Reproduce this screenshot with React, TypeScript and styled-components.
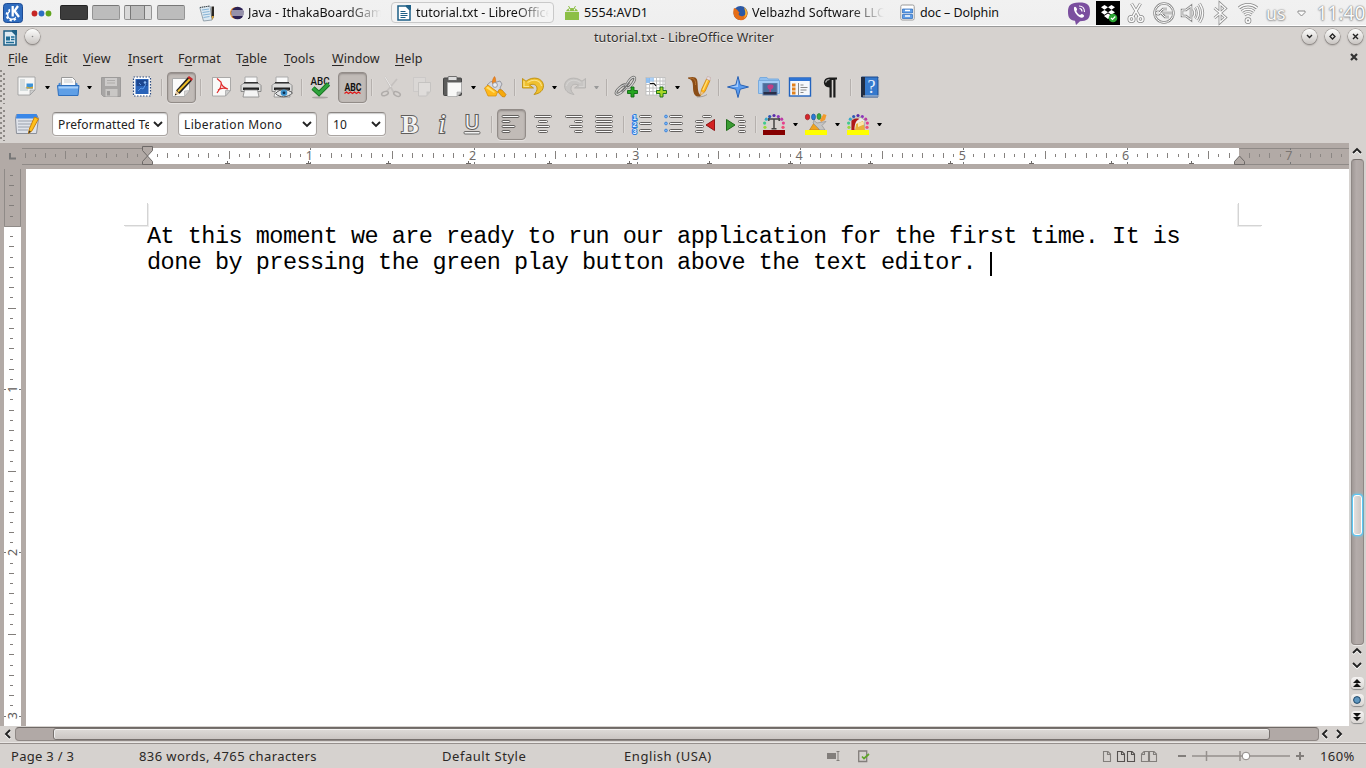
import React from "react";
import styled, { createGlobalStyle, css } from "styled-components";

const Global = createGlobalStyle`
  * { box-sizing: border-box; }
  html, body { margin: 0; padding: 0; overflow: hidden; background: #d6d2cf; }
  svg { display: block; flex: none; overflow: visible; }
`;

const Desktop = styled.div`
  width: 1366px; height: 768px; overflow: hidden;
  display: flex; flex-direction: column;
  background: #d6d2cf; color: #2b2826;
  font: 13px/18px "Noto Sans", "Open Sans", sans-serif;
`;

/* ---------- shared text ---------- */
const Label = styled.span<{ $w?: number; $ls?: number; $gap?: number; $fade?: boolean }>`
  display: block; flex: none; white-space: pre; overflow: visible;
  width: ${p => (p.$w ? `${p.$w}px` : "auto")};
  letter-spacing: ${p => p.$ls ?? 0}px;
  margin-left: ${p => p.$gap ?? 0}px;
  ${p => p.$fade && css`
    overflow: hidden;
    mask-image: linear-gradient(90deg, #000 75%, transparent 100%);
  `}
`;

/* ---------- desktop panel ---------- */
const Panel = styled.header`
  height: 27px; flex: none; display: flex; align-items: center;
  background: linear-gradient(#f1f1f1, #efefef);
  border-bottom: 1px solid #999; box-shadow: inset 0 -1px #fff;
  padding-left: 3px; color: #111;
  font-size: 12.5px;
`;
const Cell = styled.div<{ $gap?: number }>`
  flex: none; display: flex; align-items: center; margin-left: ${p => p.$gap ?? 0}px;
`;
const Pager = styled.div<{ $on?: boolean; $split?: boolean; $gap: number }>`
  width: 28px; height: 15px; flex: none; margin: -1px 0 0 ${p => p.$gap}px;
  border-radius: 2px; border: 1px solid ${p => (p.$on ? "#2d2d2d" : "#949494")};
  border-top-color: ${p => (p.$on ? "#222" : "#777")};
  background: ${p => p.$on ? "#3c3c3c" : p.$split
    ? "linear-gradient(90deg,#d9d9d9 5px,#777 5px 6px,#bbb 6px 19px,#777 19px 20px,#d9d9d9 20px)" : "#bcbcbc"};
`;
const Task = styled.div<{ $w: number; $gap: number; $active?: boolean }>`
  width: ${p => p.$w}px; height: 21px; flex: none; margin: -1px 0 0 ${p => p.$gap}px; padding-left: 5px;
  display: flex; align-items: center; gap: 4px; border-radius: 4px;
  border: 1px solid ${p => (p.$active ? "#c9c9c9" : "transparent")};
  background: ${p => (p.$active ? "#f4f4f4" : "transparent")};
`;
const TrayText = styled.span<{ $size: number; $gap: number }>`
  flex: none; margin: -1px 0 0 ${p => p.$gap}px; font-size: ${p => p.$size}px; color: #fafafa; line-height: 24px;
  white-space: nowrap; text-shadow: 0 0 1px #777, 0 0 2px #888, 0 1px 2px #aaa;
`;

/* ---------- window frame ---------- */
const TitleBar = styled.div`
  height: 21px; flex: none; display: flex; align-items: center; padding: 0 3px;
`;
const Title = styled.div`
  flex: 1; text-align: center; font-size: 12.5px; color: #33302e; text-shadow: 0 1px #f2f0ee; letter-spacing: .11px;
  padding-left: 26px;
`;
const RoundButton = styled.span<{ $gap?: number }>`
  width: 15px; height: 15px; flex: none; margin: -2px 0 0 ${p => p.$gap ?? 0}px; border-radius: 50%;
  display: flex; align-items: center; justify-content: center;
  background: linear-gradient(#fdfdfc, #c9c5c2);
  box-shadow: 0 0 0 .5px #8f8b88, 0 1px 2px #77726f;
`;
const MenuBar = styled.nav`
  height: 21px; flex: none; display: flex; align-items: center; padding-left: 8px;
`;
const MenuItem = styled.span<{ $w: number }>`
  width: ${p => p.$w}px; flex: none; white-space: nowrap; letter-spacing: .05px; font-size: 12.5px;
  u { text-underline-offset: 2px; }
`;
const CloseDoc = styled.span`margin: -3px 8px 0 auto;`;

/* ---------- toolbars ---------- */
const ToolRow = styled.div<{ $h: number }>`
  height: ${p => p.$h}px; flex: none; display: flex; align-items: center;
`;
const Grip = styled.i`
  width: 8px; height: 34px; flex: none;
  background: radial-gradient(circle at 1px 1px, #8d8986 0.8px, transparent 1.2px) 0 0/5px 5px,
    radial-gradient(circle at 1px 1px, #8d8986 0.8px, transparent 1.2px) 3px 3px/5px 5px;
  clip-path: inset(0 3px 0 0);
`;
const Tool = styled.span<{ $gap: number; $on?: boolean; $dim?: boolean }>`
  flex: none; display: flex; align-items: center; justify-content: center;
  width: ${p => (p.$on ? 29 : 24)}px; height: ${p => (p.$on ? 31 : 24)}px; margin-left: ${p => p.$gap}px;
  opacity: ${p => (p.$dim ? 0.5 : 1)};
  ${p => p.$on && css`
    border: 1px solid #928c88; border-radius: 4px; background: #c1bbb7;
    box-shadow: inset 0 1px 2px #8d8784, 0 1px #e5e2e0;
  `}
`;
const Arrow = styled.i<{ $gap: number; $dim?: boolean }>`
  width: 5px; height: 3px; flex: none; margin: 0 1.5px 0 ${p => p.$gap + 1.5}px;
  border: solid transparent; border-width: 3px 2.5px 0; border-top-color: ${p => (p.$dim ? "#999" : "#000")};
`;
const Sep = styled.i<{ $gap: number }>`
  width: 1px; height: 17px; flex: none; margin-left: ${p => p.$gap}px; background: #b5b0ad; box-shadow: 1px 0 #dedbd8;
`;
const Combo = styled.div<{ $w: number; $gap: number }>`
  width: ${p => p.$w}px; height: 24px; flex: none; margin-left: ${p => p.$gap}px; padding: 0 4px 0 5px;
  display: flex; align-items: center; justify-content: space-between; gap: 4px;
  background: #fff; border: 1px solid #aaa5a2; border-top-color: #8b8683; border-radius: 4px;
  box-shadow: inset 0 1px 1px #ccc, 0 1px #e8e6e4; font-size: 12px; color: #222;
`;
const ComboText = styled.span<{ $ls: number }>`
  flex: 1; min-width: 0; margin-top: 1px; overflow: hidden; white-space: nowrap; letter-spacing: ${p => p.$ls}px;
`;

/* ---------- document area ---------- */
const Work = styled.main`height: 583px; flex: none; display: flex;`;
const Editor = styled.section`width: 1349px; display: flex; flex-direction: column; background: #b2aaa6;`;
const RulerRow = styled.div`height: 26px; flex: none;`;
const PageRow = styled.div`flex: 1; display: flex; min-height: 0;`;
const SideRuler = styled.div`width: 26px; flex: none; overflow: hidden;`;
const Page = styled.article`
  flex: 1; background: #fff; display: flex; flex-direction: column; padding: 34px 87px 0 98px;
`;
const Corners = styled.div`display: flex; justify-content: space-between; height: 24px; flex: none;`;
const Corner = styled.i<{ $right?: boolean }>`
  width: 24px; height: 23px; border: solid #d4d4d4;
  border-width: ${p => (p.$right ? "0 0 1px 1px" : "0 1px 1px 0")};
  box-shadow: ${p => (p.$right ? "-1px 1px #ececec" : "1px 1px #ececec")};
`;
const Body = styled.p`
  margin: -3px 0 0 23px; color: #000; white-space: pre; letter-spacing: -.51px;
  font: 23.500px/26px "Liberation Mono", monospace;
`;
const Caret = styled.i`
  display: inline-block; width: 2px; height: 24px; vertical-align: -7px; background: #000;
`;

/* ---------- scroll bars ---------- */
const VScroll = styled.aside`
  width: 17px; display: flex; flex-direction: column; align-items: center; background: #d6d2cf; padding-right: 1px;
`;
const VTrack = styled.div`
  width: 13px; height: 486px; flex: none; padding: 335px 1px 0; border-radius: 4px;
  background: linear-gradient(90deg, #a09996, #b4acaa 40%, #aea6a3); border: 1px solid #8f8885; border-top-color: #77716e;
  box-shadow: 0 1px #eceae8;
`;
const VThumb = styled.div`
  height: 40px; border-radius: 3px; border: 1px solid #fff; background: linear-gradient(90deg, #e3e0de, #cdc8c5);
  box-shadow: 0 0 0 1px #5cc8f5, 0 0 3px 1px #5cd0ff;
`;
const SmallButton = styled.span`
  width: 13px; height: 12px; margin-bottom: 5px; flex: none; border-radius: 4px;
  display: flex; align-items: center; justify-content: center;
  background: linear-gradient(#f4f2f1, #dad6d3); box-shadow: 0 1px 1px #888;
`;
const Chevron = styled.span<{ $h: number }>`
  height: ${p => p.$h}px; flex: none; display: flex; align-items: center; justify-content: center;
`;
const HScroll = styled.div`height: 17px; flex: none; display: flex; align-items: center; padding-bottom: 1px; border-bottom: 1px solid #e9e6e4;`;
const HTrack = styled.div`
  width: 1304px; height: 14px; margin: 0 1px 0 2px; padding: 1px 0 0 37px; border-radius: 4px;
  background: #b1a9a6; border: 1px solid #8f8885; border-top: 1px solid #6f6966;
`;
const HThumb = styled.div`
  width: 1217px; height: 12px; margin-top: -1px; border-radius: 3px; border: 1px solid #77716e;
  background: linear-gradient(#dedbd8, #cbc6c3); box-shadow: inset 0 1px #f3f1f0, inset 1px 0 #eee;
`;

/* ---------- status bar ---------- */
const Status = styled.footer`
  flex: 1; display: flex; align-items: center; border-top: 1px solid #96908d; padding: 0 0 0 11px;
  font-size: 13px; color: #2b2826;
`;

const ICON = { width: 24, height: 24, viewBox: "0 0 24 24", fill: "none" } as const;

const Chev = ({ d }: { d: string }) => (
  <svg width="10" height="10" viewBox="0 0 10 10" fill="none">
    <path d={d} stroke="#fff" strokeWidth="2" transform="translate(0 1)" />
    <path d={d} stroke="#222" strokeWidth="1.9" />
  </svg>
);
const UP = "M1 7L5 3L9 7", DOWN = "M1 3L5 7L9 3", LEFT = "M7 1L3 5L7 9", RIGHT = "M3 1L7 5L3 9";

const NewDoc = () => (
  <svg {...ICON}><path d="M4 2h17v13l-5 5H4z" fill="#f6f6f5" stroke="#999" strokeWidth=".8" /><path d="M21 15h-5v5z" fill="#ccc" stroke="#999" strokeWidth=".6" />
    <path d="M6 5h5M6 7h5M6 9h5M6 11h5M6 13h12M6 15h8" stroke="#b6c3c6" />
    <rect x="12.500" y="8.500" width="6.500" height="5" fill="#3d93d8" /><path d="M12.500 13.500v-2l3 1 3.500-1v2z" fill="#d5a72e" /></svg>
);
const OpenFolder = () => (
  <svg {...ICON}><path d="M5.500 12V2.500h11l3 3V12z" fill="#fafafa" stroke="#999" /><path d="M8 5h8M8 7h9" stroke="#ccc" />
    <path d="M2.500 8.500l2-1v4h15v-4l2 1v5h-19z" fill="#4387d6" />
    <path d="M1.500 10.500h21.500l-1 10h-19.500z" fill="#5f9fe6" stroke="#2f6fbd" /><path d="M2.500 11.500h19.500v2h-19.500z" fill="#a8cff8" /></svg>
);
const Floppy = () => (
  <svg {...ICON}><path d="M2.500 2.500h19v19h-17l-2-2z" fill="#7c7c7c" stroke="#666" /><rect x="6" y="3" width="12" height="8" fill="#c6c6c6" />
    <path d="M8 5.500h8M8 8h8" stroke="#888" /><rect x="6.500" y="14" width="12" height="7.500" fill="#bdbdbd" /><rect x="8" y="16" width="3" height="4.500" fill="#666" /></svg>
);
const Stamp = () => (
  <svg {...ICON}><rect x="3.500" y="2" width="17" height="19" fill="#fff" stroke="#2a4a80" strokeWidth="1.200" strokeDasharray="1.500 1.500" />
    <rect x="5.500" y="4" width="13" height="15" fill="#2862b8" /><rect x="6.500" y="5" width="11" height="6" fill="#1c468f" />
    <path d="M8 16l3-3 2 1 3-5M9 8l2 2" stroke="#5f9bea" /><circle cx="15" cy="7.500" r="1.300" fill="#8dbcf5" /></svg>
);
const EditPencil = () => (
  <svg {...ICON}><path d="M2.500 3.500h17v12l-5 6h-12z" fill="#fbfbfa" stroke="#aaa" /><path d="M19.500 15.500l-5 .5v5.500z" fill="#d8d5d3" stroke="#aaa" strokeWidth=".6" />
    <path d="M6 15.500L18 2l4 3.500L9.500 19z" fill="#222" /><path d="M8 16.500L20 4" stroke="#f0c02b" strokeWidth="1.900" />
    <path d="M17.500 2.500l1.500-1.500 4 3-1.500 2z" fill="#c6282c" /><path d="M6 15.500l3.500 3.500-4.500 1.500z" fill="#e8c89a" /><path d="M5.500 18.500l1.200 1.300-2 .8z" fill="#111" /></svg>
);
const Pdf = () => (
  <svg {...ICON}><path d="M3.500 2.500h18v13l-5 5.500h-13z" fill="#f9f9f8" stroke="#999" strokeWidth=".8" />
    <path d="M21.500 15.500h-5v5.500z" fill="#ccc" stroke="#999" strokeWidth=".6" />
    <path d="M8 3.500l4 3.500c1 3-1 7-4 11M12 7c0 3 3 6 7 7M9 15c3-2 6-2.500 9.500-1" stroke="#e02b2b" strokeWidth="1.200" /></svg>
);
const Printer = ({ eye = false }) => (
  <svg {...ICON}><path d="M6 9V2h12v7" fill="#fafafa" stroke="#aaa" /><path d="M5 7h14v4H5z" fill="#333" />
    <path d="M2 10.500l2-2h16l2 2v6H2z" fill="#dcdcdb" stroke="#777" strokeWidth=".8" /><path d="M4 12.500h16v2.500H4z" fill="#222" />
    <path d="M5.500 15h13l1.500 7H4z" fill="#f4f4f4" stroke="#888" strokeWidth=".8" />
    {eye && <><path d="M5.500 18.500c4-5 12-5 17-.5-5 5-13 5-17 .5z" fill="#e4e6e8" stroke="#555" /><circle cx="14" cy="17.800" r="3.300" fill="#3d93cc" /><circle cx="14" cy="17.800" r="1.400" fill="#0d2c4d" /></>}
  </svg>
);
const Abc = ({ wave = false }) => (
  <svg {...ICON}><text x="12" y={wave ? 15.500 : 9.500} textAnchor="middle" textLength={wave ? 17 : 19} lengthAdjust="spacingAndGlyphs"
      fontFamily="Roboto, sans-serif" fontWeight={wave ? 700 : 500} fontSize={wave ? 11.500 : 11} fill="#111">ABC</text>
    {wave ? <path d="M3.500 18.500l2-1.500 2 1.500 2-1.500 2 1.500 2-1.500 2 1.500 2-1.500 2 1.500" stroke="#e01818" strokeWidth="1.200" />
      : <><ellipse cx="12" cy="22.500" rx="8" ry="1" fill="#aaa6a3" /><path d="M5 13l6 5.500L20.500 9" stroke="#15721f" strokeWidth="4.600" /><path d="M5 13l6 5.500L20.500 9" stroke="#2fa33c" strokeWidth="3" /></>}
  </svg>
);
const Cut = () => (
  <svg {...ICON}><path d="M6 2l9 16M18 4L8 16" stroke="#b5b2b0" strokeWidth="1.800" /><path d="M6 2l6 10" stroke="#fff" />
    <ellipse cx="6" cy="18.500" rx="3.500" ry="2" stroke="#8b8886" strokeWidth="1.500" transform="rotate(-20 6 18.500)" />
    <ellipse cx="18" cy="19" rx="3.500" ry="2" stroke="#8b8886" strokeWidth="1.500" transform="rotate(25 18 19)" /></svg>
);
const Copy = () => (
  <svg {...ICON}><path d="M3.500 2.500h12v14h-12z" fill="#dedddc" stroke="#bbb" strokeWidth=".8" />
    <path d="M8.500 7.500h12v9l-4 4.500h-8z" fill="#e8e7e6" stroke="#aaa" strokeWidth=".8" /><path d="M20.500 16.500h-4v4.500z" fill="#bbb" /></svg>
);
const Paste = () => (
  <svg {...ICON}><rect x="2.500" y="3" width="18" height="17.500" rx="1" fill="#5c5c5b" stroke="#444" /><rect x="7" y="1.500" width="9" height="4" rx="1" fill="#ddd" stroke="#555" strokeWidth=".8" />
    <path d="M6.500 7.500h14v9.500l-4.500 4.500h-9.500z" fill="#f8f8f7" stroke="#aaa" strokeWidth=".8" /><path d="M20.500 17h-4.500v4.500z" fill="#ccc" stroke="#999" strokeWidth=".5" /></svg>
);
const Brush = () => (
  <svg {...ICON}><path d="M4 10l4-3.500 4 1 5-1.500 2 3-2 4 1 2-4 2z" fill="#d5d8e0" stroke="#868890" strokeWidth=".8" />
    <path d="M9.500 8.500c-.5-3 .5-5 2-7 1 1 1.500 4 1 7.500z" fill="#f08a1d" stroke="#c96010" strokeWidth=".5" />
    <circle cx="12" cy="10" r="2.400" fill="#eceef2" stroke="#8a8c95" strokeWidth=".8" />
    <path d="M1.500 13l3.500-3 9.500 7-1.500 4H5z" fill="#ffb91c" stroke="#d78a00" strokeWidth=".7" /><path d="M3 13l2-1.500 7 5.500-1 1z" fill="#ffe06a" />
    <path d="M16 14.500l3 .5 4 4.500-1.500 2.500-2.500-.5-4-4.500z" fill="#f6a90c" stroke="#c87b00" strokeWidth=".7" /></svg>
);
const Turn = ({ gray = false }) => (
  <svg {...ICON}><g transform={gray ? "matrix(-1 0 0 1 24 0)" : undefined}>
    <path d="M1.500 3.500V13h11l-4-3c3.500-1.500 7-.5 7.500 3 .3 2.500-1 4.500-3 6.500 6-1 9.500-4 9.500-9C22 3 12 .500 5 6.200z"
      fill={gray ? "#b9b9b8" : "#efc02f"} stroke={gray ? "#8e8e8d" : "#b98700"} strokeWidth=".8" strokeLinejoin="round" />
    <path d="M3 6v5.500h5M6.500 7.500c6-4 13-2.500 14 3.500" stroke={gray ? "#d5d5d4" : "#fbe48b"} strokeWidth="1.100" /></g></svg>
);
const Plus = ({ x, y, c = "#25a51f" }: { x: number; y: number; c?: string }) => (
  <path transform={`translate(${x} ${y})`} d="M3.500 0h3v3.500h3.500v3h-3.500v3.500h-3v-3.500h-3.500v-3h3.500z" fill={c} stroke="#0e6b12" strokeWidth=".9" />
);
const chain = [
  { cx: 15.5, cy: 7.5, r: 36 },
  { cx: 6, cy: 14.5, r: 48 },
];
const Link = () => (
  <svg {...ICON}>
    {[["#666665", 2.6], ["#d8d8d7", 1.2]].map(([stroke, width]) => chain.map(c => (
      <ellipse key={`${stroke}${c.cx}`} cx={c.cx} cy={c.cy} rx="2.300" ry="6.500" stroke={stroke as string} strokeWidth={width as number} transform={`rotate(${c.r} ${c.cx} ${c.cy})`} />
    )))}
    <path d="M6.500 16.500l8-9" stroke="#777" strokeWidth="1.600" />
    <Plus x={12.500} y={12} />
  </svg>
);
const Table = () => (
  <svg {...ICON}><rect x="2" y="2.500" width="19" height="17.500" fill="#fff" stroke="#bbb" strokeWidth=".8" /><path d="M5.500 3v17M9 3v17M12.500 3v17M16 3v17M19 3v17M2 6h19M2 9.500h19M2 13h19M2 16.500h19" stroke="#c2c2c2" />
    <rect x="2" y="3" width="4" height="5" fill="#7fb7f2" opacity=".85" /><rect x="6" y="2.500" width="4" height="4" fill="#9fc9f7" opacity=".85" /><path d="M6 8.500h4l2 2.500" stroke="#111" strokeWidth="1.200" /><Plus x={12.500} y={12} c="#a8d527" /></svg>
);
const Draw = () => (
  <svg {...ICON}><path d="M1 2.500c4-1 8-1 9 2 1.500 5-.5 13 4 16l-1 1.500c-6 0-7-5-7-10 0-5-1-7.500-5-8.500z" fill="#8b4d17" />
    <path d="M3 3c4 .2 6 2 5.500 7" stroke="#b97734" /><path d="M10 22c5 0 8-1 10-2.500" stroke="#a39e9a" />
    <path d="M13.500 20.500l1-6L19.500 4l3.500 1.500-5 11z" fill="#ffb61f" stroke="#c78314" strokeWidth=".8" /><path d="M16 15l4.500-10" stroke="#ffe17a" strokeWidth="1.200" />
    <path d="M19.500 4l1-2.500 3 1-.7 3z" fill="#e8dfe0" stroke="#b99" strokeWidth=".5" /><path d="M13.500 20.500l.7-4 2.500 1.200z" fill="#eac28d" /></svg>
);
const Nav = () => (
  <svg {...ICON}><path d="M12 1.500l2.200 8.300L22.500 12l-8.300 2.200L12 22.500l-2.200-8.300L1.500 12l8.300-2.200z" fill="#5b9df0" stroke="#2a62b4" /><path d="M12 4v8h-8l6.500-1.500z" fill="#a9cdfb" /></svg>
);
const Gallery = () => (
  <svg {...ICON}><path d="M2 5.500l1-3h7l1 1.500h10.500v6H2z" fill="#92c0ef" stroke="#79abde" /><path d="M1.500 5.500h21v13h-21z" fill="#a4cdf6" stroke="#79abde" />
    <rect x="6" y="8.500" width="14" height="11.500" fill="#4b6d9c" stroke="#5d7da8" /><path d="M10.500 10.500c1-1.500 5.500-1.500 6 0 .5 1.500-1 3.500-2.500 4v3h-1.500v-3c-1.500-.5-2.500-2.500-2-4z" fill="#c03f86" /><path d="M6.500 17h13v2.500h-13z" fill="#2a2f48" /></svg>
);
const Data = () => (
  <svg {...ICON}><rect x="1.500" y="3" width="21" height="18" fill="#f5f8fc" stroke="#2263bf" strokeWidth="1.400" /><path d="M2 3h20v3H2z" fill="#2e74d4" />
    <path d="M4 8.500h3.500v3H4zM4 12.500h3.500v3H4zM4 16.500h3.500v3H4z" fill="#e2811c" /><path d="M10.500 8v12" stroke="#888" /><path d="M12.500 10h3M12.500 12.500h7M12.500 15h6M12.500 17.500h3" stroke="#888" /></svg>
);
const Pilcrow = () => (
  <svg {...ICON}><path d="M18 2.500h-7.500c-7.500 0-7.500 10 0 10v10h2.200V5h1.600v17.500h2.200V4.500h1.500z" fill="#1b1b1b" /><path d="M6.500 7.500c.7-2.200 2-3 4-3" stroke="#aaa" strokeWidth="1.200" /></svg>
);
const Help = () => (
  <svg {...ICON}><path d="M3.500 2h16.500v20H3.500z" fill="#3579cd" stroke="#1d4a8c" /><path d="M3 2h4v20H3z" fill="#222d42" /><path d="M20 4h1.500v17H5" stroke="#ccc" />
    <text x="13.500" y="17.500" textAnchor="middle" fontFamily="Liberation Serif, serif" fontSize="18" fill="#e7f1ff">?</text></svg>
);
const Styles = () => (
  <svg {...ICON}><path d="M1.500 2.500h20l2 4-2 15h-20l-1-15z" fill="#dfe3ea" stroke="#8c9099" /><path d="M2 2h19.500l1.500 4.500H.8z" fill="#3987e8" /><path d="M3 9h17M3 12h15M3 15h13M3 18h10" stroke="#9aa1ad" />
    <path d="M13.500 21.500l.8-4.500L19.500 5l4 1.800-6.500 12z" fill="#ffc01a" stroke="#c9800d" /><path d="M13.500 21.500l.5-3 2 1z" fill="#333" /></svg>
);
const Glyph = ({ ch, style }: { ch: string; style: "b" | "i" | "u" }) => (
  <svg {...ICON}>
    <text x="12" y={style === "u" ? 17 : 20.5} textAnchor="middle" fontFamily={style === "u" ? "Noto Sans, sans-serif" : "Liberation Serif, serif"}
      fontWeight={style === "b" ? 700 : 400} fontStyle={style === "i" ? "italic" : "normal"} fontSize={style === "u" ? 20 : style === "i" ? 27 : 26}
      fill="#f2f2f2" stroke="#5f5d5b" strokeWidth={style === "b" ? 1.800 : 2.200} paintOrder="stroke">{ch}</text>
    {style === "u" && <rect x="4" y="19.500" width="16" height="2.500" rx="1" fill="#f2f2f2" stroke="#5f5d5b" strokeWidth=".9" />}
  </svg>
);
type Bar = [number, number, number];
const Bars = ({ bars, children }: { bars: Bar[]; children?: React.ReactNode }) => (
  <svg {...ICON}>{bars.map(([x, y, w], i) => <rect key={i} x={x + 0.5} y={y + 0.5} width={w - 1} height="2" rx="1" fill="#fafafa" stroke="#63605e" />)}{children}</svg>
);
const alignBars = (widths: number[], mode: "left" | "center" | "right"): Bar[] =>
  widths.map((w, i) => [mode === "left" ? 1.5 : mode === "center" ? 12 - w / 2 : 20 - w, 3 + i * 5, w]);
const Bullet = ({ num = false }) => (
  <Bars bars={[3, 10, 17].map((y): Bar => [num ? 9 : 7, y, num ? 13 : 14])}>
    {[0, 1, 2].map(i => num
      ? <text key={i} x="2.500" y={7.500 + i * 7} fontFamily="Liberation Sans" fontSize="7.500" fontWeight="700" fill="#e6f1ff" stroke="#2b7de0" strokeWidth="2" paintOrder="stroke">{i + 1}</text>
      : <circle key={i} cx="4" cy={4.500 + i * 7} r="1.400" fill="#7fb6f5" stroke="#2f7bd4" strokeWidth=".8" />)}
  </Bars>
);
const Indent = ({ inc = false }) => (
  <Bars bars={inc ? [[10, 3, 10], [14, 8, 8], [14, 13, 8], [14, 18, 8]] : [[9, 3, 10], [2, 8, 9], [2, 13, 9], [2, 18, 9]]}>
    {inc ? <path d="M2.500 7.500v11l8.500-5.500z" fill="#3a9b32" stroke="#1c6a17" /> : <path d="M21.500 7.500v11l-8.500-5.500z" fill="#d42222" stroke="#8e1414" />}
  </Bars>
);
const ring = ["#9ad93b", "#3fc98e", "#38a9c9", "#2c55b4", "#5b2ca8", "#8a35bb", "#bb3aa5", "#e5408d", "#ef4f76"];
const Ring = () => <>{ring.map((c, i) => {
  const a = Math.PI * (1.1 - (i * 1.2) / 8);
  return <circle key={c} cx={12 + 9.500 * Math.cos(a)} cy={12.500 - 9 * Math.sin(a)} r="1.600" fill={c} />;
})}</>;
const FontColor = () => (
  <svg {...ICON}><Ring /><path d="M6.500 7h11M12 7v10M9.500 16.800h5M6.800 6v3M17.200 6v3" stroke="#444" strokeWidth="1.500" /><rect x="1" y="18" width="22" height="5" fill="#850000" /></svg>
);
const Highlight = () => (
  <svg {...ICON}><ellipse cx="3.500" cy="5" rx="2.200" ry="2.800" fill="#d7262b" stroke="#8f1518" strokeWidth=".6" /><ellipse cx="9.500" cy="5" rx="2" ry="3" fill="#2c7bd6" stroke="#1a4e90" strokeWidth=".6" /><ellipse cx="15" cy="4.500" rx="2" ry="3" fill="#3aad3e" stroke="#237226" strokeWidth=".6" />
    <path d="M16 8l3.500-6 3 1-1.500 5-4 2z" fill="#f29b2c" /><path d="M5.500 18l5-8 5 8z" fill="#f0a41f" stroke="#b9770f" strokeWidth=".6" /><path d="M10 8.500l3 2.500 9-1.500-4 4 3 4.500h-5l-7-7z" fill="#c4c4c3" stroke="#888" strokeWidth=".6" /><rect x="1" y="18" width="22" height="5" fill="#ff0" /></svg>
);
const Background = () => (
  <svg {...ICON}><Ring /><path d="M6 7l9-1.500 4 3-1 9.500H6z" fill="#efece6" stroke="#888" strokeWidth=".6" /><path d="M5.500 9c1-2 5-3 8-2-3 1-5 4-5 11h-3z" fill="#b01818" /><path d="M10 12l7-3 2 9H9z" fill="#e8b23a" /><path d="M12 11l5-1.500 1 3-6 2.500z" fill="#f9e6ad" /><rect x="1" y="18" width="22" height="5" fill="#ff0" /></svg>
);

/* ---------- rulers ---------- */
const INCH = 163.25;
const tickLength = (k: number) => (k % 16 === 0 ? 0 : k % 8 === 0 ? 8 : k % 2 === 0 ? 5 : 3);

const TopRuler = () => {
  const ticks: React.ReactNode[] = [];
  for (let k = -12; k <= 117; k++) {
    const x = Math.floor(147.500 + (k * INCH) / 16), len = tickLength(k), over = x > 1239 || x < 147;
    if (x > 1343 || k === 0 || k === 107) continue;
    if (len) ticks.push(<rect key={k} x={x} y={Math.round(12 - len / 2)} width="1" height={len} fill={over ? "#8b8683" : "#86827f"} />);
    else ticks.push(<path key={k} d={`M${x + 0.5} 5v2M${x + 0.5} 19v2`} stroke="#777" />);
  }
  return (
    <svg width="1349" height="26" viewBox="0 0 1349 26" fill="none">
      <rect width="1349" height="26" fill="#b2aaa6" />
      <path d="M22 5.500H147M22 21.500H147M1239 5.500H1349M1239 21.500H1349" stroke="#8f8a87" strokeWidth="1" />
      <rect x="147" y="5" width="1092" height="16" fill="#fff" />
      <path d="M10 10v5.500h6" stroke="#777" strokeWidth="2" />
      {ticks}
      {Array.from({ length: 13 }, (_, i) => {
        const x = Math.floor(147.3 + (i + 1) * 80.35) + 0.5;
        return <path key={i} d={`M${x} 18v3M${x - 2.5} 20.500h5`} stroke="#6d6967" />;
      })}
      {[1, 2, 3, 4, 5, 6, 7].map(n => (
        <text key={n} x={146 + n * INCH} y="17" textAnchor="middle" fontFamily="Noto Sans, sans-serif" fontSize="12.500" fill={n === 7 ? "#7a7572" : "#6d6967"}>{n}</text>
      ))}
      <path d="M142.500 3.500h10v4l-5 5.500-5-5.500zM142.500 21.500h10v-3l-5-5.500-5 5.500z" fill="#b2aaa6" stroke="#6d6967" />
      <path d="M1234.500 21.500h10v-3l-5-5.500-5 5.500z" fill="#b2aaa6" stroke="#6d6967" />
    </svg>
  );
};
const LeftRuler = () => {
  const ticks: React.ReactNode[] = [];
  for (let k = -5; k <= 48; k++) {
    const y = Math.floor(57.4 + (k * INCH) / 16), len = tickLength(k);
    if (k === 0) continue;
    if (len) ticks.push(<rect key={k} x={12 - Math.ceil(len / 2)} y={y} width={len} height="1" fill="#827e7b" />);
    else ticks.push(<path key={k} d={`M4 ${y + 0.5}h2M19 ${y + 0.5}h2`} stroke="#777" />);
  }
  return (
    <svg width="26" height="557" viewBox="0 0 26 557" fill="none">
      <rect x="4" y="58" width="17" height="499" fill="#fff" />
      <path d="M4.500 0v57.500h16V0" stroke="#8f8a87" />
      {ticks}
      {[1, 2, 3].map(n => (
        <text key={n} transform={`translate(17 ${57 + n * INCH}) rotate(-90)`} textAnchor="middle" fontFamily="Noto Sans, sans-serif" fontSize="12.500" fill="#5f5b59">{n}</text>
      ))}
    </svg>
  );
};

/* ---------- panel icons ---------- */
const KLogo = () => (
  <svg width="20" height="20" viewBox="0 0 20 20" fill="none"><rect x=".5" y=".5" width="19" height="19" rx="3" fill="#2f6cbf" stroke="#1d4b94" />
    <circle cx="9" cy="12" r="5.300" stroke="#fff" strokeWidth="2.200" strokeDasharray="2.200 1.950" /><circle cx="9" cy="12" r="4.300" stroke="#fff" strokeWidth="1.400" />
    <path d="M9.500 2.500v11M15 3l-4 5 5 6.500" stroke="#2f6cbf" strokeWidth="4.800" /><path d="M9.700 3v10.500M15 3L11.500 8l4.500 6" stroke="#fff" strokeWidth="2.300" /></svg>
);
const Dots = () => (
  <svg width="21" height="8" viewBox="0 0 21 8"><circle cx="3.500" cy="4.500" r="2.900" fill="#c62626" /><circle cx="10.500" cy="4.500" r="2.900" fill="#2c6ec2" /><circle cx="17.500" cy="4.500" r="2.900" fill="#5fa41c" /></svg>
);
const NotePad = () => (
  <svg width="16" height="17" viewBox="0 0 16 17" fill="none"><path d="M.8 2.500L11 1l2 14-8.500 1z" fill="#dce9f2" stroke="#95a3ad" /><path d="M3 5l7-1M3.500 7.500l7-1M4 10l7-1M4.500 12.500l6-1" stroke="#86b3d6" />
    <path d="M1 2.500l10-1.500" stroke="#444" strokeDasharray="1 1" /><path d="M12.500 1.500h2.500v10l-1.500 3-1-3z" fill="#2a2622" /><path d="M12.500 11l1 4 1.500-4z" fill="#d8a43e" /></svg>
);
const Eclipse = () => (
  <svg width="14" height="14" viewBox="0 0 14 14"><circle cx="6" cy="7" r="6" fill="#e98a25" /><circle cx="7.600" cy="7" r="6.300" fill="#2c2255" /><path d="M1.500 5h12.200M1.300 7h12.600M1.500 9h12.200" stroke="#fff" strokeWidth="1.100" /></svg>
);
const WriterIcon = ({ filled = false }) => (
  <svg width="14" height="16" viewBox="0 0 14 16" fill="none"><path d="M1 1h8l4 4v10H1z" fill={filled ? "#dceaf2" : "#fff"} stroke="#1d5f86" strokeWidth="1.500" /><path d="M8.500 0H14v5.500z" fill="#1d5f86" />
    {filled ? <><rect x="3" y="6.500" width="4" height="4" fill="#1d6c96" /><path d="M8 7h3.500M8 9.500h3.500M3 12.500h8" stroke="#1d6c96" strokeWidth="1.300" /></>
      : <path d="M3.500 6.500h5M3.500 8.500h7M3.500 10.500h7M3.500 12.500h5" stroke="#1d5f86" />}</svg>
);
const Android = () => (
  <svg width="14" height="14" viewBox="0 0 14 14"><path d="M0 6h14v8H0zM1 5.300C2 .8 12 .8 13 5.300z" fill="#8cbf45" /><path d="M3.500 0l1.500 2.500M10.500 0L9 2.500" stroke="#8cbf45" /><circle cx="4.500" cy="3.700" r=".7" fill="#fff" /><circle cx="9.500" cy="3.700" r=".7" fill="#fff" /></svg>
);
const Firefox = () => (
  <svg width="15" height="16" viewBox="0 0 15 16"><circle cx="7.500" cy="8" r="7" fill="#2b58a5" /><path d="M1 3c-1.500 4-1 12 7 12.200 6 0 8-7 5.500-11 .5 5-2 7-5 7-2 0-4-2-2-3.700L5 6C4 4 3 4 1 3z" fill="#e66d16" /><path d="M11 2c4 3 4 9 0 11 2-4 1.500-6 0-11z" fill="#fbb52f" /></svg>
);
const Dolphin = () => (
  <svg width="15" height="17" viewBox="0 0 15 17" fill="none"><rect x=".8" y="1" width="13.400" height="15" rx="1.500" fill="#fff" stroke="#999" /><path d="M2.500 5h10v4h-10zM2.500 10.500h10v4h-10z" fill="#5f9ee8" stroke="#2865b5" strokeWidth=".7" /><path d="M5 6.500h5M5 12h5" stroke="#fff" strokeWidth="1.500" /></svg>
);
const Viber = () => (
  <svg width="22" height="23" viewBox="0 0 22 23" fill="none"><path d="M11 .5C20 .5 22 3 22 10s-3 9-10 9.300L8 23l-1-4.200C2 18 0 16 0 10S2 .5 11 .5z" fill="#7b4f9f" /><path d="M6 5.500c1-1.500 2-.5 3 1.500.5 1-1 1.500-.5 2.500s2 3 3.500 3.500c1 0 1-1.500 2.500-.8 2 1.300 2 1.600 1 2.800C13 18 5 11 6 5.500z" fill="#fff" /><path d="M11 4c4 0 5.500 2 5.500 6M11.500 6.500c2 .2 2.500 1 2.500 3" stroke="#fff" strokeWidth="1.100" /></svg>
);
const Dropbox = () => (
  <svg width="24" height="24" viewBox="0 0 24 24"><rect width="24" height="24" fill="#000" /><path d="M8.500 4l3.500 2.300L8.500 8.700 5 6.300zM15.500 4L19 6.300l-3.500 2.400L12 6.300zM8.500 9l3.500 2.300-3.500 2.400L5 11.300zM15.500 9l3.500 2.300-3.500 2.400-3.500-2.400zM8 15l4-2.500L16 15l-4 3z" fill="#fff" /><circle cx="17" cy="17" r="4.300" fill="#2ba532" /><path d="M15 17l1.500 1.500L19.300 15.500" stroke="#fff" fill="none" strokeWidth="1.200" /></svg>
);
const Outlined = ({ w, children }: { w: number; children: (stroke: string, extra: number) => React.ReactNode }) => (
  <svg width={w} height="22" viewBox={`0 0 ${w} 22`} fill="none">{children("#888", 1.5)}{children("#fafafa", 0)}</svg>
);
const Scissors = () => <Outlined w={16}>{(s, e) => <g stroke={s} strokeWidth={1.5 + e}><path d="M3.500 1.500L11 14M12.500 1.500L5 14" /><circle cx="3.500" cy="17" r="2.500" /><circle cx="12.500" cy="17" r="2.500" /></g>}</Outlined>;
const Usb = () => <Outlined w={22}>{(s, e) => <g stroke={s} strokeWidth={1 + e}><circle cx="11" cy="11" r="9.500" /><path d="M3 11h16M6 11l4-4h4M8 11l4 4h4" /><circle cx="5" cy="11" r="1.300" /></g>}</Outlined>;
const Volume = () => <Outlined w={24}>{(s, e) => <g stroke={s} strokeWidth={1 + e}><path d="M1 8h4l5-4v14l-5-4H1z" /><path d="M12.500 7c1.500 2.500 1.500 5.500 0 8M15.500 4.500c2.500 4 2.500 9 0 13M18.500 1.500c4 6 4 13 0 19" strokeWidth={1.500 + e} /></g>}</Outlined>;
const Bluetooth = () => <Outlined w={14}>{(s, e) => <path d="M1.500 6l11 9.500-5.500 5V1.500l5.500 5L1.500 16" stroke={s} strokeWidth={1.300 + e} />}</Outlined>;
const Wifi = () => <Outlined w={20}>{(s, e) => <g stroke={s} strokeWidth={1.600 + e}><path d="M1 6c5-4.500 13-4.500 18 0M3.800 9.500c3.500-3 9-3 12.400 0M6.500 13c2-1.700 5-1.700 7 0" /><circle cx="10" cy="18.500" r="1.800" /></g>}</Outlined>;

/* label, index of the underlined letter, width up to the next menu */
const menus: [string, number, number][] = [
  ["File", 0, 37], ["Edit", 0, 38], ["View", 0, 45], ["Insert", 0, 50], ["Format", 1, 58],
  ["Table", 1, 48], ["Tools", 0, 48], ["Window", 0, 63], ["Help", 0, 40],
];

export default function App() {
  return (
    <Desktop>
      <Global />
      <Panel>
        <KLogo />
        <Cell $gap={8}><Dots /></Cell>
        <Pager $on $gap={8} /><Pager $gap={4} /><Pager $split $gap={4} /><Pager $gap={5} />
        <Cell $gap={14}><NotePad /></Cell>
        <Task $w={162} $gap={9}><Eclipse /><Label $w={133} $fade>Java - IthakaBoardGame</Label></Task>
        <Task $w={163} $gap={5} $active><WriterIcon /><Label $w={133} $gap={1} $fade>tutorial.txt - LibreOffice</Label></Task>
        <Task $w={162} $gap={5}><Android /><Label $gap={1} $ls={0.1}>5554:AVD1</Label></Task>
        <Task $w={162} $gap={6}><Firefox /><Label $w={132} $fade>Velbazhd Software LLC</Label></Task>
        <Task $w={160} $gap={5}><Dolphin /><Label $gap={1} $ls={-0.1}>doc – Dolphin</Label></Task>
        <Cell $gap={14}><Viber /></Cell>
        <Cell $gap={6}><Dropbox /></Cell>
        <Cell $gap={8}><Scissors /></Cell>
        <Cell $gap={9}><Usb /></Cell>
        <Cell $gap={6}><Volume /></Cell>
        <Cell $gap={8}><Bluetooth /></Cell>
        <Cell $gap={11}><Wifi /></Cell>
        <TrayText $size={18} $gap={8}>us</TrayText>
        <Cell $gap={11}><svg width="9" height="7" viewBox="0 0 9 7"><path d="M1 1h7v1.500L4.500 6 1 2.500z" fill="#fafafa" stroke="#888" /></svg></Cell>
        <TrayText $size={19} $gap={11}>11:40</TrayText>
      </Panel>

      <TitleBar>
        <WriterIcon filled />
        <RoundButton $gap={8}><svg width="3" height="3"><circle cx="1.500" cy="1.500" r=".8" fill="#888" /></svg></RoundButton>
        <Title>tutorial.txt - LibreOffice Writer</Title>
        <RoundButton><svg width="7" height="7" viewBox="0 0 7 7" fill="none"><path d="M1 2l2.500 2.500L6 2" stroke="#222" strokeWidth="1.400" /></svg></RoundButton>
        <RoundButton $gap={8}><svg width="7" height="7" viewBox="0 0 7 7" fill="none"><path d="M3.500 1L6 3.500 3.500 6 1 3.500z" stroke="#222" strokeWidth="1.300" /></svg></RoundButton>
        <RoundButton $gap={8}><svg width="7" height="7" viewBox="0 0 7 7" fill="none"><path d="M1 1l5 5M6 1L1 6" stroke="#222" strokeWidth="1.400" /></svg></RoundButton>
      </TitleBar>

      <MenuBar>
        {menus.map(([t, u, w]) => <MenuItem key={t} $w={w}>{t.slice(0, u)}<u>{t[u]}</u>{t.slice(u + 1)}</MenuItem>)}
        <CloseDoc><svg width="8" height="8" viewBox="0 0 8 8" fill="none"><path d="M1 1l6 6M7 1L1 7" stroke="#333" strokeWidth="2.200" /></svg></CloseDoc>
      </MenuBar>

      <ToolRow $h={36}>
        <Grip />
        <Tool $gap={6}><NewDoc /></Tool><Arrow $gap={5} />
        <Tool $gap={5}><OpenFolder /></Tool><Arrow $gap={5} />
        <Tool $gap={6} $dim><Floppy /></Tool>
        <Tool $gap={7}><Stamp /></Tool><Sep $gap={7} />
        <Tool $gap={5} $on><EditPencil /></Tool><Sep $gap={4} />
        <Tool $gap={8}><Pdf /></Tool><Tool $gap={6}><Printer /></Tool><Tool $gap={7}><Printer eye /></Tool><Sep $gap={7} />
        <Tool $gap={6}><Abc /></Tool><Tool $gap={6} $on><Abc wave /></Tool><Sep $gap={4} />
        <Tool $gap={7} $dim><Cut /></Tool><Tool $gap={7} $dim><Copy /></Tool><Tool $gap={7}><Paste /></Tool><Arrow $gap={4} />
        <Tool $gap={6}><Brush /></Tool><Sep $gap={7} />
        <Tool $gap={6}><Turn /></Tool><Arrow $gap={5} /><Tool $gap={5} $dim><Turn gray /></Tool><Arrow $gap={5} $dim /><Sep $gap={6} />
        <Tool $gap={8}><Link /></Tool><Tool $gap={5}><Table /></Tool><Arrow $gap={5} /><Tool $gap={6}><Draw /></Tool><Sep $gap={7} />
        <Tool $gap={7}><Nav /></Tool><Tool $gap={7}><Gallery /></Tool><Tool $gap={7}><Data /></Tool><Tool $gap={7}><Pilcrow /></Tool><Sep $gap={7} />
        <Tool $gap={7}><Help /></Tool>
      </ToolRow>

      <ToolRow $h={38}>
        <Grip />
        <Tool $gap={7}><Styles /></Tool>
        <Combo $w={116} $gap={13}><ComboText $ls={0.12}>Preformatted Text</ComboText><Chev d={DOWN} /></Combo>
        <Combo $w={139} $gap={10}><ComboText $ls={0.36}>Liberation Mono</ComboText><Chev d={DOWN} /></Combo>
        <Combo $w={59} $gap={10}><ComboText $ls={0.2}>10</ComboText><Chev d={DOWN} /></Combo>
        <Tool $gap={12}><Glyph ch="B" style="b" /></Tool><Tool $gap={8}><Glyph ch="i" style="i" /></Tool><Tool $gap={6}><Glyph ch="U" style="u" /></Tool><Sep $gap={7} />
        <Tool $gap={5} $on><Bars bars={alignBars([18, 9, 14, 9], "left")} /></Tool>
        <Tool $gap={5}><Bars bars={alignBars([18, 10, 14, 10], "center")} /></Tool>
        <Tool $gap={8}><Bars bars={alignBars([18, 9, 14, 9], "right")} /></Tool>
        <Tool $gap={5}><Bars bars={alignBars([18, 18, 18, 18], "center")} /></Tool><Sep $gap={7} />
        <Tool $gap={6}><Bullet num /></Tool><Tool $gap={8}><Bullet /></Tool><Tool $gap={7}><Indent /></Tool><Tool $gap={7}><Indent inc /></Tool><Sep $gap={7} />
        <Tool $gap={6}><FontColor /></Tool><Arrow $gap={5} /><Tool $gap={5}><Highlight /></Tool><Arrow $gap={5} /><Tool $gap={5}><Background /></Tool><Arrow $gap={5} />
      </ToolRow>

      <Work>
        <Editor>
          <RulerRow><TopRuler /></RulerRow>
          <PageRow>
            <SideRuler><LeftRuler /></SideRuler>
            <Page>
              <Corners><Corner /><Corner $right /></Corners>
              <Body>{"At this moment we are ready to run our application for the first time. It is\ndone by pressing the green play button above the text editor. "}<Caret /></Body>
            </Page>
          </PageRow>
        </Editor>
        <VScroll>
          <Chevron $h={16}><Chev d={UP} /></Chevron>
          <VTrack><VThumb /></VTrack>
          <Chevron $h={12}><Chev d={UP} /></Chevron>
          <Chevron $h={15}><Chev d={DOWN} /></Chevron>
          <Chevron $h={5} />
          <SmallButton><svg width="8" height="8" viewBox="0 0 8 8"><path d="M4 0l4 4H0zM4 4l4 4H0z" fill="#111" /></svg></SmallButton>
          <SmallButton><svg width="8" height="8" viewBox="0 0 8 8"><circle cx="4" cy="4" r="3.400" fill="#5f97c0" stroke="#1f4767" /></svg></SmallButton>
          <SmallButton><svg width="8" height="8" viewBox="0 0 8 8"><path d="M4 4L0 0h8zM4 8L0 4h8z" fill="#111" /></svg></SmallButton>
        </VScroll>
      </Work>

      <HScroll>
        <Cell $gap={3}><Chev d={LEFT} /></Cell>
        <HTrack><HThumb /></HTrack>
        <Chev d={LEFT} />
        <Cell $gap={4}><Chev d={RIGHT} /></Cell>
      </HScroll>

      <Status>
        <Label $w={128} $ls={0.3}>Page 3 / 3</Label>
        <Label $w={303} $ls={0.42}>836 words, 4765 characters</Label>
        <Label $w={182} $ls={0.55}>Default Style</Label>
        <Label $w={203} $ls={0.57}>English (USA)</Label>
        <svg width="13" height="10" viewBox="0 0 13 10" fill="none"><path d="M0 2h9v6H0z" fill="#827e7b" /><path d="M9.500.5h3M9.500 9.500h3M11 1v8" stroke="#827e7b" /></svg>
        <Cell $gap={18}><svg width="12" height="13" viewBox="0 0 12 13" fill="none"><path d="M.7 1h8v10.500h-8z" stroke="#827e7b" strokeWidth="1.300" /><path d="M4 6.500l2 2L11 4" stroke="#5fa52a" strokeWidth="1.700" /></svg></Cell>
        <Cell $gap={233}><svg width="54" height="11" viewBox="0 0 54 11" fill="none">
          <g strokeWidth="1.100"><path d="M.5.500h4.500l2.500 2.500v7.500h-7zM4.500.5v3h3" stroke="#827e7b" /><path d="M14.500.5h4.500l2.500 2.500v7.500h-7zM18.500.5v3h3M24.500.5h4.500l2.500 2.500v7.500h-7zM28.500.5v3h3" stroke="#55514f" />
            <path d="M46.500 10.500h-8V3l2.500-2.500h4.500v10M46.500.5h4.500l2.500 2.500v7.500h-7zM41.500.5v3h-3M50.500.5v3h3" stroke="#827e7b" /></g></svg></Cell>
        <Cell $gap={21}><svg width="126" height="12" viewBox="0 0 126 12" fill="none"><path d="M0 6h8M118 6h8M122 2v8" stroke="#827e7b" strokeWidth="2" /><path d="M14 6h98M28.500 1v10M62 1v10" stroke="#95908d" strokeWidth="1.500" /><circle cx="68" cy="6" r="3.800" fill="#fff" stroke="#8d8885" /></svg></Cell>
        <Label $gap={16} $ls={0.4}>160%</Label>
      </Status>
    </Desktop>
  );
}
